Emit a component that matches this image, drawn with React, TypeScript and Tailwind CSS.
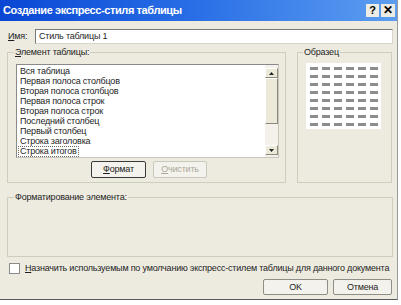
import React from "react";

const items = [
  "Вся таблица",
  "Первая полоса столбцов",
  "Вторая полоса столбцов",
  "Первая полоса строк",
  "Вторая полоса строк",
  "Последний столбец",
  "Первый столбец",
  "Строка заголовка",
  "Строка итогов",
];

const ScrollArrow = ({ up }: { up?: boolean }) => (
  <div className="flex h-[10px] w-[13px] items-center justify-center border border-t-white border-l-white border-b-[#8c8a7e] border-r-[#8c8a7e] bg-[#ece9d8]">
    <svg width="5" height="3" viewBox="0 0 5 3">
      <path d={up ? "M0 3 L2.5 0 L5 3 Z" : "M0 0 L2.5 3 L5 0 Z"} fill="#222" />
    </svg>
  </div>
);

const Preview = () => (
  <div className="ml-[8px] mt-[5px] flex h-[66px] w-[75px] flex-col justify-center gap-[5px] bg-white">
    {Array.from({ length: 8 }).map((_, r) => (
      <div key={r} className="flex justify-center gap-[4px]">
        {Array.from({ length: 6 }).map((_, c) => (
          <div key={c} className="h-[3px] w-[8px] bg-[#8d8d8d]" />
        ))}
      </div>
    ))}
  </div>
);

export default function App() {
  return (
    <div className="h-[305px] w-[401px] bg-white font-['Liberation_Sans',sans-serif] text-[9px] leading-[11px] tracking-[-0.2px] text-[#1e1e1e]">
      <div className="flex h-[300px] w-[398px] flex-col border-b border-r border-b-[#5a5a5a] border-r-[#9a9a9a] bg-[#edebe0]">
        {/* title bar */}
        <div className="flex h-[21px] items-center justify-between bg-gradient-to-r from-[#0a46d4] via-[#2a6fe6] to-[#5d9df0] pl-[3px] pr-[2px]">
          <span className="text-[11px] font-bold tracking-[-0.4px] text-white">Создание экспресс-стиля таблицы</span>
          <div className="flex gap-[2px] tracking-normal">
            <div className="flex h-[13px] w-[13px] items-center justify-center bg-[#ecebe4] text-[11px] font-bold text-black">?</div>
            <div className="flex h-[13px] w-[14px] items-center justify-center bg-[#ecebe4] text-[12px] font-bold text-black">✕</div>
          </div>
        </div>

        {/* name */}
        <div className="mt-[8px] flex h-[15px] items-center pl-[8px]">
          <span className="w-[27px]">
            <u>И</u>мя:
          </span>
          <div className="flex h-[15px] w-[358px] items-center border border-t-[#7a7a7a] border-l-[#7a7a7a] border-b-[#d8d6cc] border-r-[#d8d6cc] bg-white pl-[3px]">
            Стиль таблицы 1
          </div>
        </div>

        {/* element + sample */}
        <div className="mt-[3px] flex pl-[7px]">
          <fieldset className="h-[136px] w-[279px] border border-[#cfcdbd]">
            <legend className="ml-[6px] px-[1px]">
              <u>Э</u>лемент таблицы:
            </legend>
            <div className="ml-[8px] mt-[6px] flex h-[94px] w-[263px] border border-t-[#8a8a8a] border-l-[#8a8a8a] border-b-[#c8c6ba] border-r-[#c8c6ba] bg-white">
              <div className="flex flex-1 flex-col pl-[1px] pt-[1px]">
                {items.map((it, i) => (
                  <div
                    key={it}
                    className={
                      i === items.length - 1
                        ? "h-[11px] w-fit border border-dotted border-[#6a6a6a] px-[1px] leading-[9px]"
                        : "h-[10px] px-[2px] leading-[10px]"
                    }
                  >
                    {it}
                  </div>
                ))}
              </div>
              <div className="flex w-[13px] flex-col bg-[#f3f1ea]">
                <div className="mt-[3px]">
                  <ScrollArrow up />
                </div>
                <div className="h-[46px] w-[13px] border border-t-white border-l-white border-b-[#8c8a7e] border-r-[#8c8a7e] bg-[#ece9d8]" />
                <div className="flex-1" />
                <div className="mb-[2px]">
                  <ScrollArrow />
                </div>
              </div>
            </div>
            <div className="ml-[83px] mt-[3px] flex gap-[7px]">
              <div className="flex h-[17px] w-[55px] items-center justify-center rounded-[2px] border border-[#3a3a3a] bg-[#f3f2ec]">
                <span>
                  <u>Ф</u>ормат
                </span>
              </div>
              <div className="flex h-[17px] w-[54px] items-center justify-center rounded-[2px] border border-[#c9c7ba] bg-[#f3f2ec] text-[#aca899]">
                <span>
                  <u>О</u>чистить
                </span>
              </div>
            </div>
          </fieldset>

          <fieldset className="ml-[11px] h-[136px] w-[95px] border border-[#cfcdbd]">
            <legend className="ml-[5px] px-[1px]">Образец</legend>
            <Preview />
          </fieldset>
        </div>

        {/* formatting */}
        <div className="mt-[9px] pl-[7px]">
          <fieldset className="h-[65px] w-[386px] border border-[#cfcdbd]">
            <legend className="ml-[6px] px-[1px]">Форматирование элемента:</legend>
          </fieldset>
        </div>

        {/* checkbox */}
        <div className="mt-[6px] flex items-center pl-[9px]">
          <div className="h-[11px] w-[11px] shrink-0 border border-[#8a8a8a] bg-white" />
          <span className="ml-[5px] whitespace-nowrap">
            <u>Н</u>азначить используемым по умолчанию экспресс-стилем таблицы для данного документа
          </span>
        </div>

        {/* buttons */}
        <div className="mt-[5px] flex justify-end gap-[5px] pr-[5px]">
          <div className="flex h-[16px] w-[65px] items-center justify-center rounded-[2px] border border-[#8f8e86] bg-[#f3f2ec]">
            OK
          </div>
          <div className="flex h-[16px] w-[59px] items-center justify-center rounded-[2px] border border-[#8f8e86] bg-[#f3f2ec]">
            Отмена
          </div>
        </div>
      </div>
    </div>
  );
}
